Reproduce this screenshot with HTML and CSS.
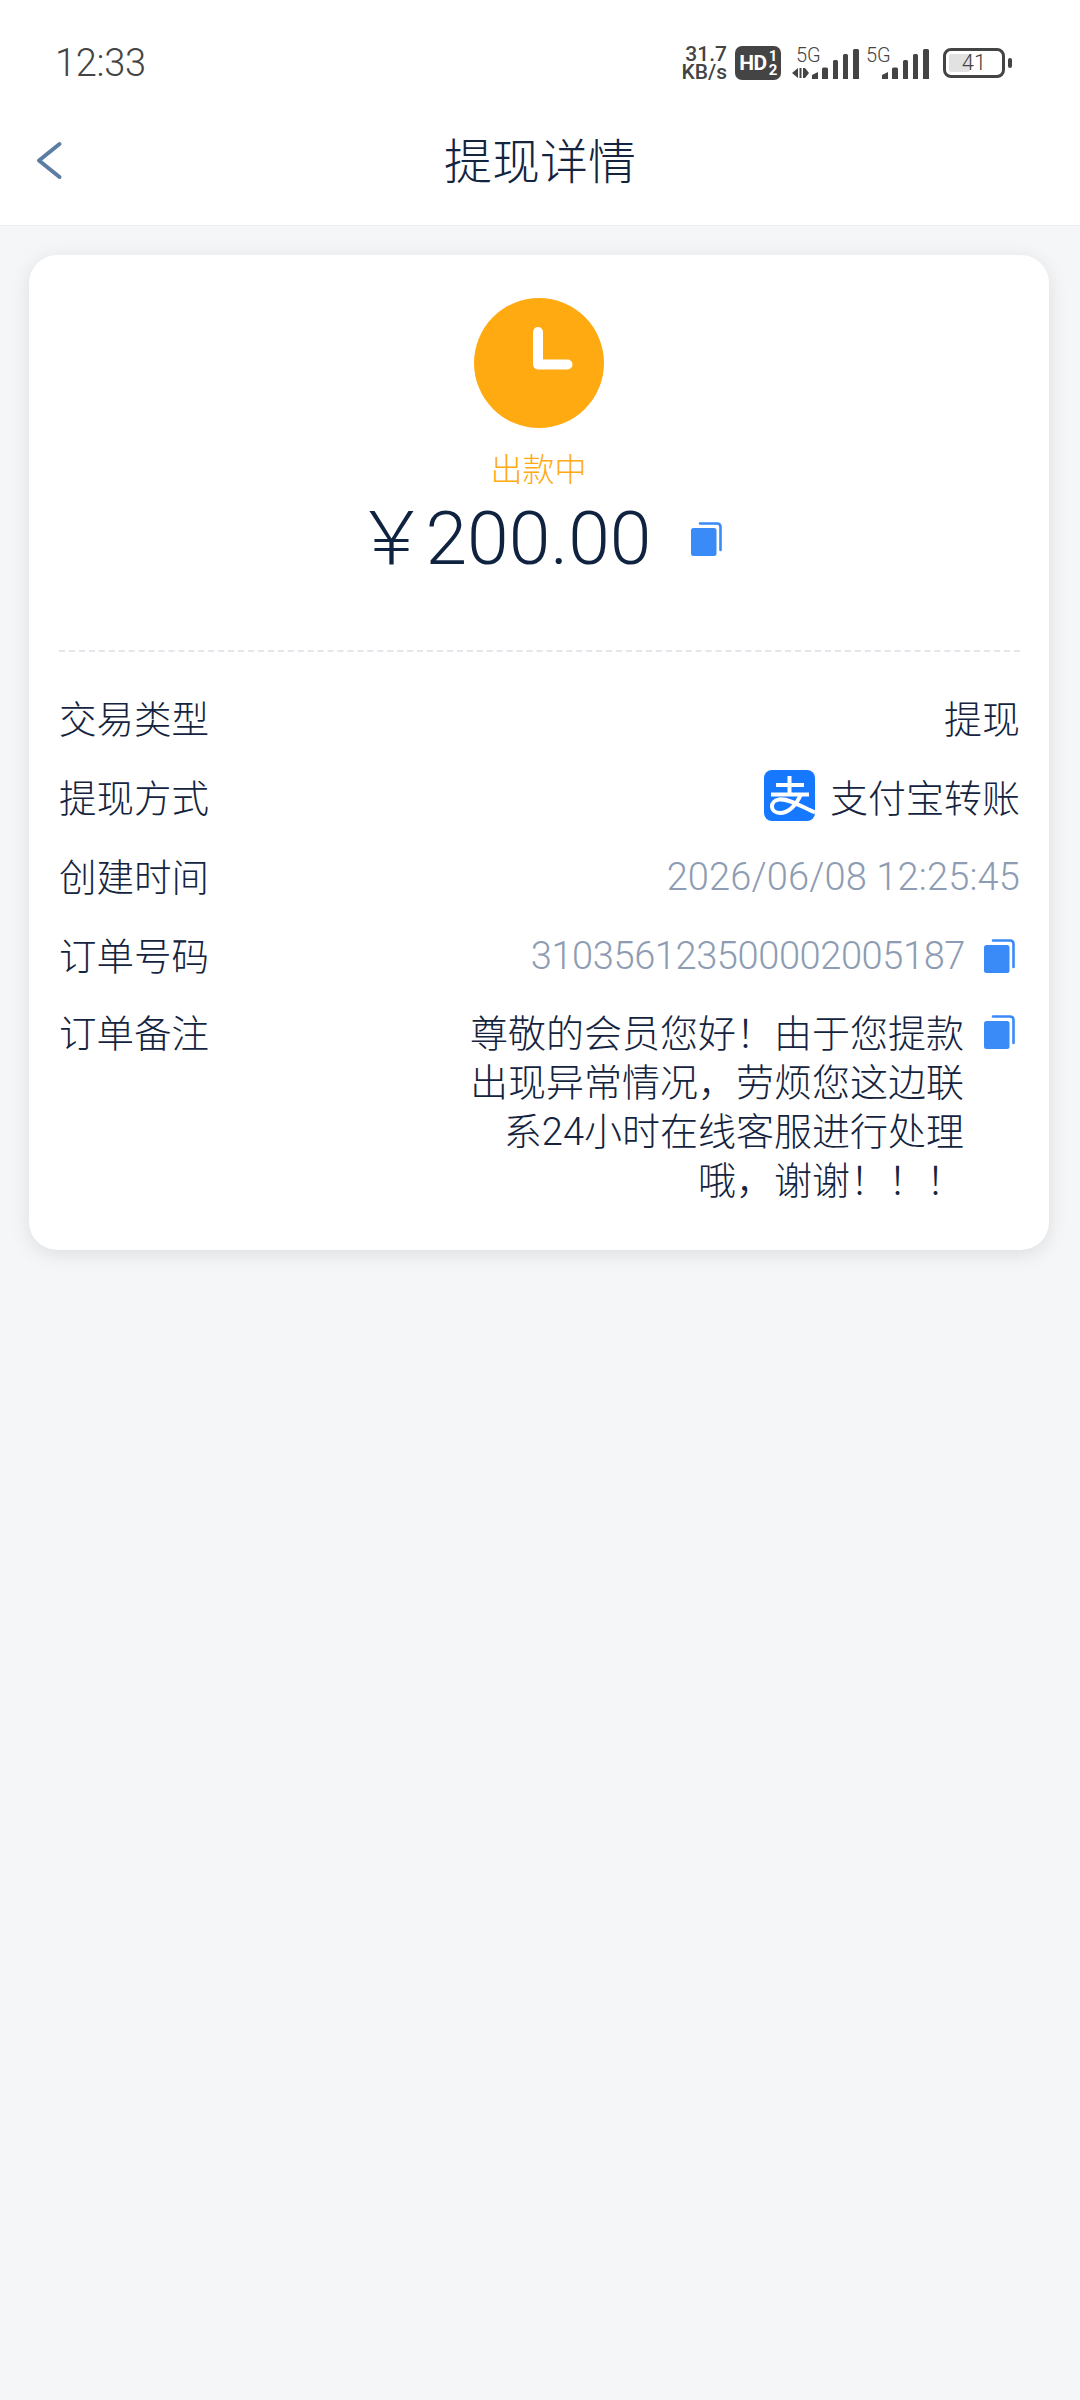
FILE: index.html
```html
<!DOCTYPE html>
<html lang="zh-CN">
<head>
    <meta charset="UTF-8">
    <meta name="viewport" content="width=device-width, initial-scale=1.0">
    <title>提现详情</title>
    <link rel="stylesheet" href="styles.css">
</head>
<body>
    <svg class="icon-defs" width="0" height="0">
        <symbol id="copy" viewBox="0 0 31 34">
            <path d="M9 1.500h17q3.500 0 3.500 3.500v23" fill="none" stroke="#3a8bf8" stroke-width="2.600" stroke-linecap="round"/>
            <rect x="0" y="6" width="25.500" height="28" rx="2.500" fill="#3a8bf8"/>
        </symbol>
    </svg>

    <header class="top">
        <div class="status-bar">
            <span class="clock">12:33</span>
            <div class="status-icons">
                <div class="speed"><span>31.7</span><span>KB/s</span></div>
                <div class="hd">HD<span class="hd-nums"><span>1</span><span>2</span></span></div>
                <div class="signal first">
                    <span class="five-g">5G</span>
                    <svg class="bars" width="67" height="30" viewBox="0 0 67 30">
                        <path d="M0 24l6-5v10zM7.500 19h2v10h-2zM11 19h2v10h-2zM13 19l4 5-4 5z" fill="#444"/>
                        <path d="M20 26l6-3v7h-6zM30 20q0-1.500 1.500-1.500h3q1.500 0 1.500 1.500v10h-6zM41 12.500q0-1.500 1.500-1.500h2q1.500 0 1.500 1.500v17.500h-5zM51 6.500q0-1.500 1.500-1.500h2q1.500 0 1.500 1.500v23.500h-5zM61 1.500q0-1.500 1.500-1.500h3q1.500 0 1.500 1.500v28.500h-6z" fill="#444"/>
                    </svg>
                </div>
                <div class="signal second">
                    <span class="five-g">5G</span>
                    <svg class="bars" width="47" height="30" viewBox="0 0 47 30">
                        <path d="M0 26l6-3v7H0zM10 20q0-1.500 1.500-1.500h3q1.500 0 1.500 1.500v10h-6zM21 12.500q0-1.500 1.500-1.500h2q1.500 0 1.500 1.500v17.500h-5zM31 6.500q0-1.500 1.500-1.500h2q1.500 0 1.500 1.500v23.500h-5zM41 1.500q0-1.500 1.500-1.500h3q1.500 0 1.500 1.500v28.500h-6z" fill="#444"/>
                    </svg>
                </div>
                <div class="battery">
                    <div class="battery-body"><div class="battery-fill"></div><span class="battery-num">41</span></div>
                    <div class="battery-cap"></div>
                </div>
            </div>
        </div>
        <div class="nav">
            <svg class="back" width="28" height="42" viewBox="0 0 28 42">
                <path d="M24.500 4L4 20.500L24.500 37" fill="none" stroke="#5b7ca3" stroke-width="4" stroke-linecap="round" stroke-linejoin="round"/>
            </svg>
            <h1 class="nav-title">提现详情</h1>
        </div>
    </header>

    <main class="card">
        <section class="summary">
            <div class="clock-badge">
                <svg width="40" height="43" viewBox="0 0 40 43">
                    <path d="M5 5V37.500H34.500" fill="none" stroke="#fff" stroke-width="10" stroke-linecap="round" stroke-linejoin="round"/>
                </svg>
            </div>
            <div class="state">出款中</div>
            <div class="amount-row">
                <span class="amount"><span class="yen">￥</span>200.00</span>
                <svg class="copy"><use href="#copy"/></svg>
            </div>
        </section>

        <section class="rows">
            <div class="row">
                <span class="label">交易类型</span>
                <span class="value">提现</span>
            </div>
            <div class="row">
                <span class="label">提现方式</span>
                <span class="value pay">
                    <svg class="alipay" width="51" height="51" viewBox="0 0 51 51">
                        <rect width="51" height="51" rx="8" fill="#1677ff"/>
                        <path d="M12 15H40M25.500 6V24M7 24.500H45" fill="none" stroke="#fff" stroke-width="4"/>
                        <path d="M37 24C32 36 24 43 16 43C6 43 5 31 15 29.500C25 28 40 38 51 42.500" fill="none" stroke="#fff" stroke-width="4"/>
                    </svg>
                    支付宝转账
                </span>
            </div>
            <div class="row">
                <span class="label">创建时间</span>
                <span class="value muted date">2026/06/08 12:25:45</span>
            </div>
            <div class="row">
                <span class="label">订单号码</span>
                <span class="value muted with-copy"><span class="order-no">310356123500002005187</span><svg class="copy"><use href="#copy"/></svg></span>
            </div>
            <div class="row note-row">
                <span class="label">订单备注</span>
                <div class="note">
                    <p class="note-text">尊敬的会员您好！由于您提款出现异常情况，劳烦您这边联系24小时在线客服进行处理哦，谢谢！！！</p>
                    <svg class="copy"><use href="#copy"/></svg>
                </div>
            </div>
        </section>
    </main>
</body>
</html>
```

FILE: styles.css
```css
* {
    margin: 0;
    padding: 0;
    box-sizing: border-box;
    font-family: 'Roboto', 'Noto Sans CJK SC', sans-serif;
}

body {
    width: 1080px;
    min-height: 2400px;
    background: #f5f6f8;
    color: #14243e;
    font-weight: 300;
}

.icon-defs {
    position: absolute;
}

.top {
    background: #ffffff;
    height: 225px;
    box-shadow: 0 1px 0 #eeeff1;
}

.status-bar {
    height: 112px;
    padding: 14px 68px 0 55px;
    display: flex;
    justify-content: space-between;
    align-items: center;
}

.clock {
    font-size: 38px;
    letter-spacing: -0.3px;
    color: #444444;
}

.status-icons {
    display: flex;
    align-items: center;
    color: #444444;
}

.speed {
    display: flex;
    flex-direction: column;
    align-items: flex-end;
    width: 44px;
    font-size: 21px;
    line-height: 18px;
    font-weight: 500;
    white-space: nowrap;
}

.hd {
    width: 46px;
    height: 34px;
    margin-left: 8px;
    background: #444444;
    border-radius: 7px;
    color: #ffffff;
    font-size: 21px;
    font-weight: 700;
    display: flex;
    align-items: center;
    justify-content: center;
    letter-spacing: -0.5px;
}

.hd-nums {
    display: flex;
    flex-direction: column;
    font-size: 15px;
    line-height: 14px;
    margin-left: 2px;
}

.signal {
    position: relative;
    height: 32px;
}

.signal.first {
    width: 67px;
    margin-left: 11px;
}

.signal.second {
    width: 63px;
    margin-left: 7px;
}

.five-g {
    position: absolute;
    top: -2px;
    font-size: 20px;
    font-weight: 300;
    line-height: 20px;
}

.first .five-g {
    left: 4px;
}

.second .five-g {
    left: 0;
}

.bars {
    position: absolute;
    right: 0;
    bottom: 0;
}

.battery {
    display: flex;
    align-items: center;
    gap: 3px;
    margin-left: 14px;
}

.battery-body {
    width: 62px;
    height: 30px;
    border: 3px solid #444444;
    border-radius: 8px;
    position: relative;
    padding: 3px;
}

.battery-fill {
    width: 41%;
    height: 100%;
    background: #e2e2e2;
    border-radius: 2px;
}

.battery-num {
    position: absolute;
    left: 0;
    right: 0;
    top: 0;
    text-align: center;
    font-size: 22px;
    line-height: 24px;
}

.battery-cap {
    width: 4px;
    height: 10px;
    background: #444444;
    border-radius: 2px;
}

.nav {
    height: 92px;
    position: relative;
    display: flex;
    align-items: center;
    justify-content: center;
}

.back {
    position: absolute;
    left: 35px;
    top: 28px;
}

.nav-title {
    font-size: 48px;
    font-weight: 300;
}

.card {
    margin: 30px 31px 0 29px;
    background: #ffffff;
    border-radius: 28px;
    box-shadow: 0 4px 20px rgba(0, 0, 0, 0.1);
    padding: 43px 29px 44px 30px;
}

.summary {
    display: flex;
    flex-direction: column;
    align-items: center;
    height: 354px;
    padding-right: 2px;
    border-bottom: 2px dashed #e3e6ea;
}

.clock-badge {
    width: 130px;
    height: 130px;
    border-radius: 50%;
    background: #ffaa10;
    padding: 29px 0 0 59px;
}

.clock-badge svg {
    display: block;
}

.state {
    margin-top: 22px;
    font-size: 32px;
    line-height: 40px;
    color: #ffaa10;
}

.amount-row {
    margin-top: 8px;
    display: flex;
    align-items: center;
    gap: 40px;
    color: #0f2240;
}

.amount {
    font-size: 75px;
    line-height: 80px;
}

.yen {
    font-size: 74px;
    margin-right: -3px;
}

.copy {
    width: 31px;
    height: 34px;
    flex: none;
}

.rows {
    padding-top: 25px;
    display: flex;
    flex-direction: column;
}

.row {
    height: 79px;
    display: flex;
    align-items: center;
    justify-content: space-between;
    font-size: 38px;
}

.label {
    font-size: 37.500px;
}

.value {
    display: flex;
    align-items: center;
}

.pay {
    gap: 15px;
}

.muted {
    color: #8d9cb2;
    padding-top: 4px;
}

.date {
    letter-spacing: 0.15px;
}

.order-no {
    letter-spacing: -0.4px;
}

.with-copy {
    gap: 19px;
    margin-right: 5px;
}

.note-row {
    height: auto;
    align-items: flex-start;
    margin-top: 17px;
    line-height: 49px;
}

.note {
    display: flex;
    align-items: flex-start;
    gap: 20px;
    margin-right: 5px;
}

.note-text {
    width: 500px;
    text-align: right;
}

.note .copy {
    margin-top: 5px;
}
```
